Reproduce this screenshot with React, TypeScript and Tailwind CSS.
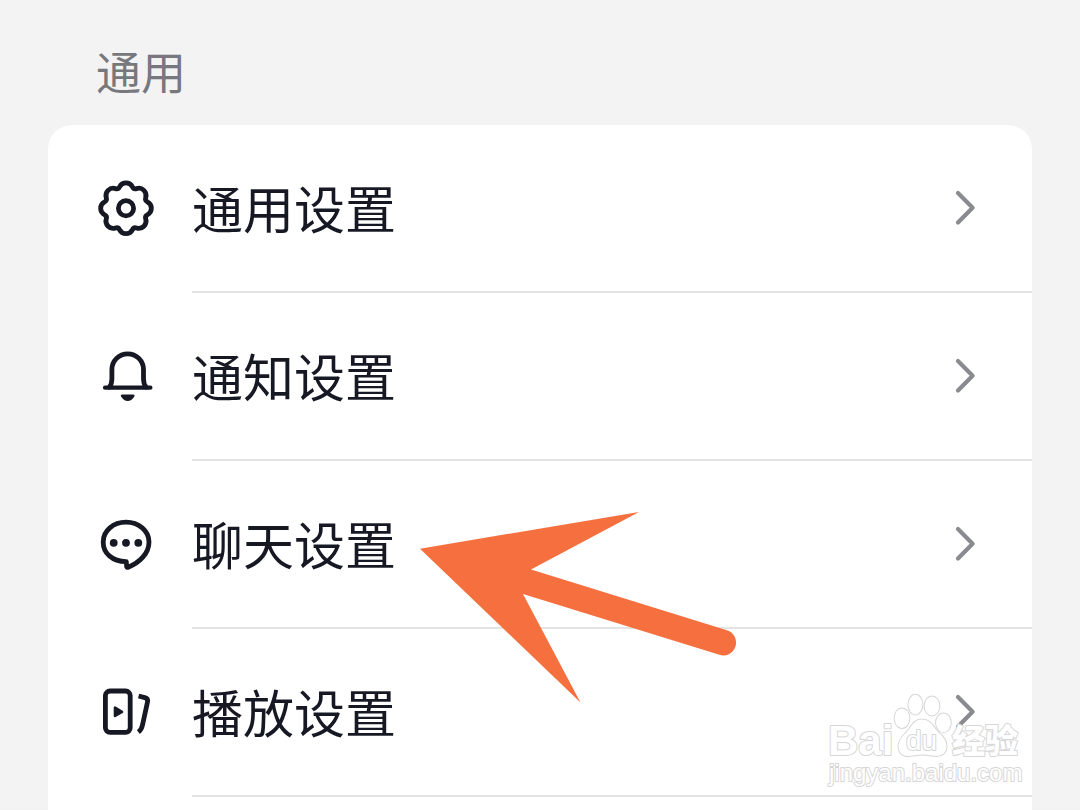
import type { ReactNode } from "react";

const gearPoint = (degrees: number) => {
  const angle = (degrees * Math.PI) / 180;
  return `${(30 + 22.3 * Math.cos(angle)).toFixed(2)} ${(30.3 + 22.3 * Math.sin(angle)).toFixed(2)}`;
};

// eight round lobes, joined by small inward curves
const gearPath =
  `M${gearPoint(-17)}` +
  Array.from({ length: 8 }, (_, i) => {
    const middle = i * 45;
    return `A7.3 7.3 0 0 1 ${gearPoint(middle + 17)}A3.3 3.3 0 0 0 ${gearPoint(middle + 28)}`;
  }).join("") +
  "Z";

const Icon = ({ children }: { children: ReactNode }) => (
  <svg
    viewBox="0 0 60 60"
    className="size-15 shrink-0"
    fill="none"
    stroke="currentColor"
    strokeWidth={4.8}
    strokeLinecap="round"
    strokeLinejoin="round"
    aria-hidden="true">
    {children}
  </svg>
);

const GearIcon = () => (
  <Icon>
    <path d={gearPath} />
    <circle cx={30} cy={30.3} r={7.6} />
  </Icon>
);

const BellIcon = () => (
  <Icon>
    <path d="M9 41.7H54.4" strokeWidth={4.2} />
    <path d="M13.5 41C15.4 38.6 15.9 36 15.9 32.5V23.6A15.8 15.8 0 0 1 47.5 23.6V32.5C47.5 36 48 38.6 49.9 41" />
    <path
      d="M26.3 48.4H37.1C38.6 48.4 39 49.6 38.2 50.8C34.8 56.4 28.6 56.4 25.2 50.8C24.4 49.6 24.8 48.4 26.3 48.4Z"
      fill="currentColor"
      stroke="none"
    />
  </Icon>
);

const ChatIcon = () => (
  <Icon>
    <path d="M30.3 47.6C16 47.6 7.2 39 7.2 27.9C7.2 16.8 17.3 8.2 30 8.2C42.7 8.2 53 16.8 53 27.9C53 39.5 43.5 48.6 32.2 53.2C31.2 53.6 30.6 53.1 30.6 52.2Z" />
    <g fill="currentColor" stroke="none">
      <circle cx={17.7} cy={28.8} r={3.9} />
      <circle cx={30} cy={28.8} r={3.9} />
      <circle cx={42.3} cy={28.8} r={3.9} />
    </g>
  </Icon>
);

const PlayIcon = () => (
  <Icon>
    <rect x={9.4} y={9} width={24.8} height={41.4} rx={4.6} />
    <path d="M19 25.6V34L26 29.8Z" fill="currentColor" strokeWidth={2.6} />
    <path
      d="M42.6 14L48.8 15.6C51 16.2 52 17.8 51.5 20L46.4 43.4C45.8 46.5 44.6 48.5 42.4 50.2"
      strokeLinecap="butt"
    />
  </Icon>
);

const Chevron = () => (
  <svg
    viewBox="0 0 24 40"
    className="h-10 w-6 shrink-0 text-[#8a8b8f]"
    fill="none"
    stroke="currentColor"
    strokeWidth={4.2}
    strokeLinecap="round"
    strokeLinejoin="round"
    aria-hidden="true">
    <path d="M5 5L19.6 19.7L5 34.4" />
  </svg>
);

const Arrow = () => (
  <svg
    viewBox="0 0 318 192"
    className="pointer-events-none absolute top-[512px] left-[420px] w-[318px] text-[#f6703f]"
    fill="currentColor"
    aria-hidden="true">
    <path d="M0 36.7L219 0L111 57.5L307 118.2A12.8 12.8 0 0 1 299.4 142.8L103 82L160.5 190.5Z" />
  </svg>
);

const Watermark = () => (
  <svg
    viewBox="-10 0 220 110"
    className="pointer-events-none absolute right-10 bottom-2.5 w-[220px] font-['Liberation_Sans','Noto_Sans_CJK_SC',sans-serif] [paint-order:stroke]"
    fill="#fff"
    stroke="#d6d6d6"
    strokeWidth={2}
    strokeLinejoin="round">
    <ellipse cx={72} cy={28.3} rx={7.4} ry={9.8} />
    <ellipse cx={85.4} cy={14.6} rx={7} ry={9.8} />
    <ellipse cx={102} cy={16} rx={7.4} ry={9.4} />
    <ellipse cx={113.4} cy={32.8} rx={7.4} ry={9.4} />
    <path d="M92 29.5C98.5 29.5 101.5 33.5 105 38.5C109 44 116.5 48 116.5 56C116.5 62.5 112 66 106.5 66C101 66 98 64.6 92 64.6C86.5 64.6 83.5 66 78 66C72 66 68.5 62 68.5 56C68.5 48.5 75.5 44 79.5 38.5C83 33.5 85.8 29.5 92 29.5Z" />
    <text x={-2} y={65} fontSize={42} fontWeight={700}>
      Bai
    </text>
    <text x={76} y={60} fontSize={28}>
      du
    </text>
    <text x={122} y={63} fontSize={33} fontWeight={900}>
      经验
    </text>
    <text x={-1} y={91} fontSize={24}>
      jingyan.baidu.com
    </text>
  </svg>
);

const items = [
  { label: "通用设置", icon: <GearIcon /> },
  { label: "通知设置", icon: <BellIcon /> },
  { label: "聊天设置", icon: <ChatIcon /> },
  { label: "播放设置", icon: <PlayIcon /> },
];

const App = () => {
  return (
    <main className="relative flex min-h-screen flex-col overflow-hidden bg-[#f3f3f4] px-12 font-['Noto_Sans_CJK_SC',sans-serif] text-[#161823]">
      <h1 className="px-12 pt-[39px] pb-[22px] text-[45px] leading-16 text-[#77787d]">通用</h1>

      <ul className="flex-1 rounded-t-3xl bg-white">
        {items.map(({ label, icon }) => (
          <li key={label}>
            <button type="button" className="flex w-full items-stretch gap-9 pl-12 text-left">
              <span className="flex items-center pb-0.5">{icon}</span>
              <span className="flex h-42 flex-1 items-center justify-between border-b-2 border-[#e4e4e5] pr-[55px]">
                <span className="pb-0.5 text-[51px] leading-16">{label}</span>
                <Chevron />
              </span>
            </button>
          </li>
        ))}
      </ul>

      <Arrow />
      <Watermark />
    </main>
  );
};

export default App;
